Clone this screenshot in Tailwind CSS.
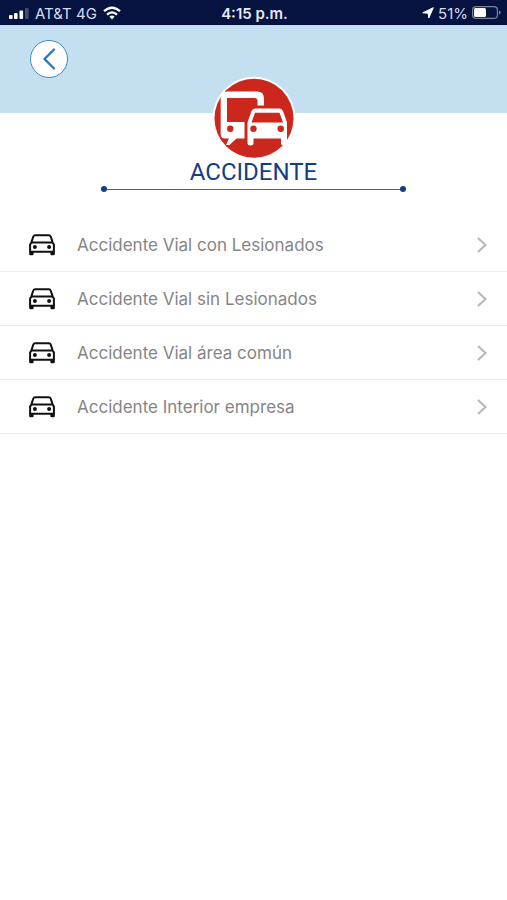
<!DOCTYPE html>
<html lang="es">
<head>
<meta charset="utf-8">
<meta name="viewport" content="width=device-width, initial-scale=1">
<title>Accidente</title>
<script src="https://cdn.jsdelivr.net/npm/@tailwindcss/browser@4"></script>
</head>
<body class="min-h-screen bg-white font-['Inter',sans-serif]">
<svg class="hidden" aria-hidden="true">
  <symbol id="car" viewBox="0 0 26 22">
    <path d="M2.300 8.600 4.300 2.500Q4.800 1.200 6.200 1.200H19.800Q21.200 1.200 21.700 2.500L23.700 8.600" fill="none" stroke="currentColor" stroke-width="2"/>
    <path d="M2.600 8.600H23.400L24.900 10.400V17.800H1.100V10.400Z" fill="none" stroke="currentColor" stroke-width="2" stroke-linejoin="round"/>
    <path d="M.2 17H4.600V20.200Q4.600 21.300 3.500 21.300H1.300Q.2 21.300 .2 20.200ZM21.400 17H25.800V20.200Q25.800 21.300 24.700 21.300H22.500Q21.400 21.300 21.400 20.200Z" fill="currentColor"/>
    <circle cx="5.900" cy="13.100" r="2" fill="currentColor"/><circle cx="20.100" cy="13.100" r="2" fill="currentColor"/>
  </symbol>
  <symbol id="next" viewBox="0 0 12 18">
    <path d="M2 2 9.500 9 2 16" fill="none" stroke="currentColor" stroke-width="2.200"/>
  </symbol>
</svg>

<div class="flex h-[25px] items-center justify-between bg-[#06123f] pl-2 pr-1.5 text-[15px] leading-none text-[#d5dcef]">
  <div class="flex flex-1 items-center gap-1.5">
    <svg class="h-3 w-[21px]" viewBox="0 0 21 12" fill="#fff" aria-hidden="true">
      <rect x="1" y="8" width="3.600" height="4" rx="1"/><rect x="6" y="6" width="3.600" height="6" rx="1"/><rect x="11.500" y="3.500" width="3.600" height="8.500" rx="1"/><rect x="17" y="1" width="3.600" height="11" rx="1" opacity=".25"/>
    </svg>
    <span class="pt-0.5">AT&amp;T 4G</span>
    <svg class="h-[14px] w-[18px]" viewBox="0 0 18 14" fill="none" stroke="#fff" stroke-width="2.300" aria-hidden="true">
      <path d="M1 5.200Q9-1.800 17 5.200M4 8.600Q9 4.200 14 8.600"/><path d="M6.400 10.600Q9 8.400 11.600 10.600L9 13.400Z" fill="#fff" stroke="none"/>
    </svg>
  </div>
  <span class="pt-0.5 font-semibold text-[#e6eaf6]">4:15 p.m.</span>
  <div class="flex flex-1 items-center justify-end gap-1">
    <svg class="h-3 w-3" viewBox="0 0 12 12" fill="#fff" stroke="#fff" stroke-linejoin="round" aria-hidden="true"><path d="M11.300.7 6.800 11 6.200 6.200 .7 5.800Z"/></svg>
    <span class="pt-0.5">51%</span>
    <svg class="h-[13px] w-[29px]" viewBox="0 0 29 13" aria-hidden="true">
      <rect x=".6" y=".6" width="24.800" height="11.800" rx="3.500" fill="none" stroke="#7b83a3" stroke-width="1.200"/><rect x="2" y="2" width="12" height="9" rx="1.500" fill="#fff"/><path d="M27 4.500Q28.700 5 28.700 6.500T27 8.500Z" fill="#7b83a3"/>
    </svg>
  </div>
</div>

<header class="h-[88px] bg-[#c4dff0] px-[30px] pt-[15px]">
  <button type="button" aria-label="Regresar" class="flex size-[38px] items-center justify-center rounded-full border border-[#4589bb] bg-white text-[#2e78b4]">
    <svg class="h-[22px] w-[14px]" viewBox="0 0 14 22" fill="none" stroke="currentColor" stroke-width="2.400" stroke-linecap="round" stroke-linejoin="round" aria-hidden="true"><path d="M12 1.500 2.500 11 12 20.500"/></svg>
  </button>
</header>

<main>
  <div class="-mt-[37px] flex flex-col items-center">
    <svg class="relative size-[84px]" viewBox="0 0 84 84" aria-hidden="true">
      <circle cx="42" cy="42.300" r="41.500" fill="#fff"/><circle cx="42" cy="42.300" r="39.500" fill="#cb271d"/>
      <path fill="#fff" d="M15.500 15.500H45Q52 15.500 52 22.500V29.500H45.500V25Q45.500 22 42.500 22H15V46H32.500V62.500H24.500L17.500 69H14L17 62.500H13Q8.700 62.500 8.700 58V22Q8.700 15.500 15.500 15.500Z"/>
      <path fill="#fff" fill-rule="evenodd" d="M43 32.500H67.500Q70 32.500 71 35L75 46.500V67Q75 69.500 72 69.500T69 67V62.500H41.500V67Q41.500 69.500 38.500 69.500T35.500 67V46.500L39.500 35Q40.500 32.500 43 32.500ZM43 36.800 39.500 46.500H71L67.500 36.800Z"/>
      <g fill="#cb271d"><circle cx="18.300" cy="52.700" r="3.200"/><circle cx="41.500" cy="52.700" r="3.200"/><circle cx="68.700" cy="52.700" r="3.200"/></g>
    </svg>
    <h1 class="-mt-0.5 font-['Roboto',sans-serif] text-[24px] leading-7 text-[#153d86]">ACCIDENTE</h1>
    <div class="flex w-3/5 items-center text-[#153d86]" aria-hidden="true">
      <span class="size-[6px] rounded-full bg-current"></span>
      <span class="h-px flex-1 bg-[#3d62a0]"></span>
      <span class="size-[6px] rounded-full bg-current"></span>
    </div>
  </div>

  <ul class="mt-[26px]">
    <li><a href="#" class="flex h-[54px] items-center border-b border-[#ededed] pl-[29px] pr-[19px] text-[17px] text-[#858585]">
      <svg class="h-[22px] w-[26px] text-[#111]" aria-hidden="true"><use href="#car"/></svg>
      <span class="ml-[22px] flex-1 pt-0.5">Accidente Vial con Lesionados</span>
      <svg class="h-[18px] w-3 text-[#b9b9b9]" aria-hidden="true"><use href="#next"/></svg></a></li>
    <li><a href="#" class="flex h-[54px] items-center border-b border-[#ededed] pl-[29px] pr-[19px] text-[17px] text-[#858585]">
      <svg class="h-[22px] w-[26px] text-[#111]" aria-hidden="true"><use href="#car"/></svg>
      <span class="ml-[22px] flex-1 pt-0.5">Accidente Vial sin Lesionados</span>
      <svg class="h-[18px] w-3 text-[#b9b9b9]" aria-hidden="true"><use href="#next"/></svg></a></li>
    <li><a href="#" class="flex h-[54px] items-center border-b border-[#ededed] pl-[29px] pr-[19px] text-[17px] text-[#858585]">
      <svg class="h-[22px] w-[26px] text-[#111]" aria-hidden="true"><use href="#car"/></svg>
      <span class="ml-[22px] flex-1 pt-0.5">Accidente Vial área común</span>
      <svg class="h-[18px] w-3 text-[#b9b9b9]" aria-hidden="true"><use href="#next"/></svg></a></li>
    <li><a href="#" class="flex h-[54px] items-center border-b border-[#ededed] pl-[29px] pr-[19px] text-[17px] text-[#858585]">
      <svg class="h-[22px] w-[26px] text-[#111]" aria-hidden="true"><use href="#car"/></svg>
      <span class="ml-[22px] flex-1 pt-0.5">Accidente Interior empresa</span>
      <svg class="h-[18px] w-3 text-[#b9b9b9]" aria-hidden="true"><use href="#next"/></svg></a></li>
  </ul>
</main>
</body>
</html>
